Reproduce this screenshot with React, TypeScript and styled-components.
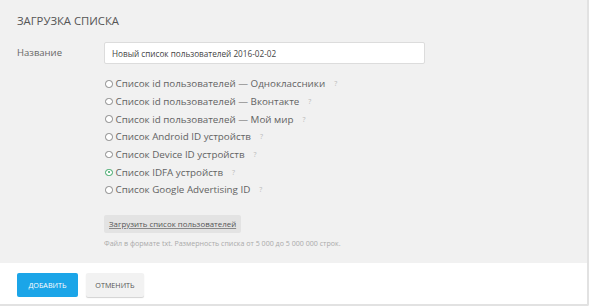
import React, { useState } from 'react'
import styled, { createGlobalStyle } from 'styled-components'

const GlobalStyle = createGlobalStyle`
  html, body {
    margin: 0;
    padding: 0;
    background: #ffffff;
  }
  body {
    font-family: 'Open Sans', 'Liberation Sans', sans-serif;
    color: #555;
  }
`

const options = [
  'Список id пользователей — Одноклассники',
  'Список id пользователей — Вконтакте',
  'Список id пользователей — Мой мир',
  'Список Android ID устройств',
  'Список Device ID устройств',
  'Список IDFA устройств',
  'Список Google Advertising ID',
]

const App = () => {
  const [selected, setSelected] = useState(5)

  return (
    <>
      <GlobalStyle />
      <Panel>
        <Body>
          <Title>ЗАГРУЗКА СПИСКА</Title>
          <FormRow>
            <Label>Название</Label>
            <Field>
              <TextInput defaultValue="Новый список пользователей 2016-02-02" />
              <RadioList>
                {options.map((o, i) => (
                  <RadioRow key={o} onClick={() => setSelected(i)}>
                    <Radio checked={selected === i} />
                    <RadioText>{o}</RadioText>
                    <Hint>?</Hint>
                  </RadioRow>
                ))}
              </RadioList>
              <UploadButton>Загрузить список пользователей</UploadButton>
              <Note>
                Файл в формате txt. Размерность списка от 5 000 до 5 000 000
                строк.
              </Note>
            </Field>
          </FormRow>
        </Body>
        <Footer>
          <Button primary>ДОБАВИТЬ</Button>
          <Button>ОТМЕНИТЬ</Button>
        </Footer>
      </Panel>
    </>
  )
}

const Panel = styled.div`
  width: 587px;
  height: 304px;
  border-right: 2px solid #e2e2e2;
  border-bottom: 2px solid #e2e2e2;
  border-radius: 0 0 2px 0;
  display: flex;
  flex-direction: column;
`

const Body = styled.div`
  background: #f1f1f1;
  height: 263px;
  box-sizing: border-box;
  padding: 12px 17px 0;
`

const Title = styled.h1`
  margin: 0;
  font-size: 11.3px;
  font-weight: 400;
  color: #555;
  line-height: 18px;
`

const FormRow = styled.div`
  display: flex;
  margin-top: 12px;
`

const Label = styled.div`
  width: 87px;
  font-size: 9.5px;
  color: #666;
  line-height: 22px;
`

const Field = styled.div`
  display: flex;
  flex-direction: column;
  align-items: flex-start;
`

const TextInput = styled.input`
  width: 321px;
  height: 22px;
  box-sizing: border-box;
  border: 1px solid #dcdcdc;
  border-radius: 2px;
  background: #fff;
  padding: 0 7px;
  font-family: 'Open Sans', 'Liberation Sans', sans-serif;
  font-size: 8.2px;
  color: #444;
  outline: none;
`

const RadioList = styled.div`
  display: flex;
  flex-direction: column;
  margin-top: 11px;
`

const RadioRow = styled.div`
  display: flex;
  align-items: center;
  height: 17.7px;
  cursor: pointer;
`

const Radio = styled.span<{ checked?: boolean }>`
  width: 7.5px;
  height: 7.5px;
  box-sizing: border-box;
  border: 1px solid ${(p) => (p.checked ? '#3aa564' : '#888')};
  border-radius: 50%;
  margin-left: 1px;
  margin-right: 3px;
  position: relative;
  background: #fff;
  &::after {
    content: '';
    display: ${(p) => (p.checked ? 'block' : 'none')};
    position: absolute;
    left: 1.75px;
    top: 1.75px;
    width: 2px;
    height: 2px;
    border-radius: 50%;
    background: #3aa564;
  }
`

const RadioText = styled.span`
  font-size: 9.8px;
  color: #636363;
`

const Hint = styled.span`
  font-size: 7px;
  color: #bbb;
  margin-left: 9px;
`

const UploadButton = styled.button`
  margin-top: 16px;
  height: 18px;
  padding: 0 5px;
  border: none;
  border-radius: 2px;
  background: #e3e3e3;
  font-family: 'Open Sans', 'Liberation Sans', sans-serif;
  font-size: 7.9px;
  color: #555;
  text-decoration: underline;
  text-decoration-color: #888;
  cursor: pointer;
`

const Note = styled.div`
  margin-top: 5px;
  font-size: 7.1px;
  color: #aaa;
`

const Footer = styled.div`
  flex: 1;
  background: #fff;
  display: flex;
  align-items: flex-start;
  gap: 8px;
  padding: 10px 17px 0;
`

const Button = styled.button<{ primary?: boolean }>`
  height: 24px;
  width: ${(p) => (p.primary ? '61px' : '58px')};
  padding: 0;
  border: none;
  border-radius: 2px;
  font-family: 'Open Sans', 'Liberation Sans', sans-serif;
  font-size: 7.2px;
  cursor: pointer;
  background: ${(p) => (p.primary ? '#1ba5e8' : '#f2f2f2')};
  color: ${(p) => (p.primary ? '#fff' : '#555')};
  box-shadow: ${(p) => (p.primary ? 'none' : '0 1px 1px rgba(0,0,0,0.18)')};
`

export default App
